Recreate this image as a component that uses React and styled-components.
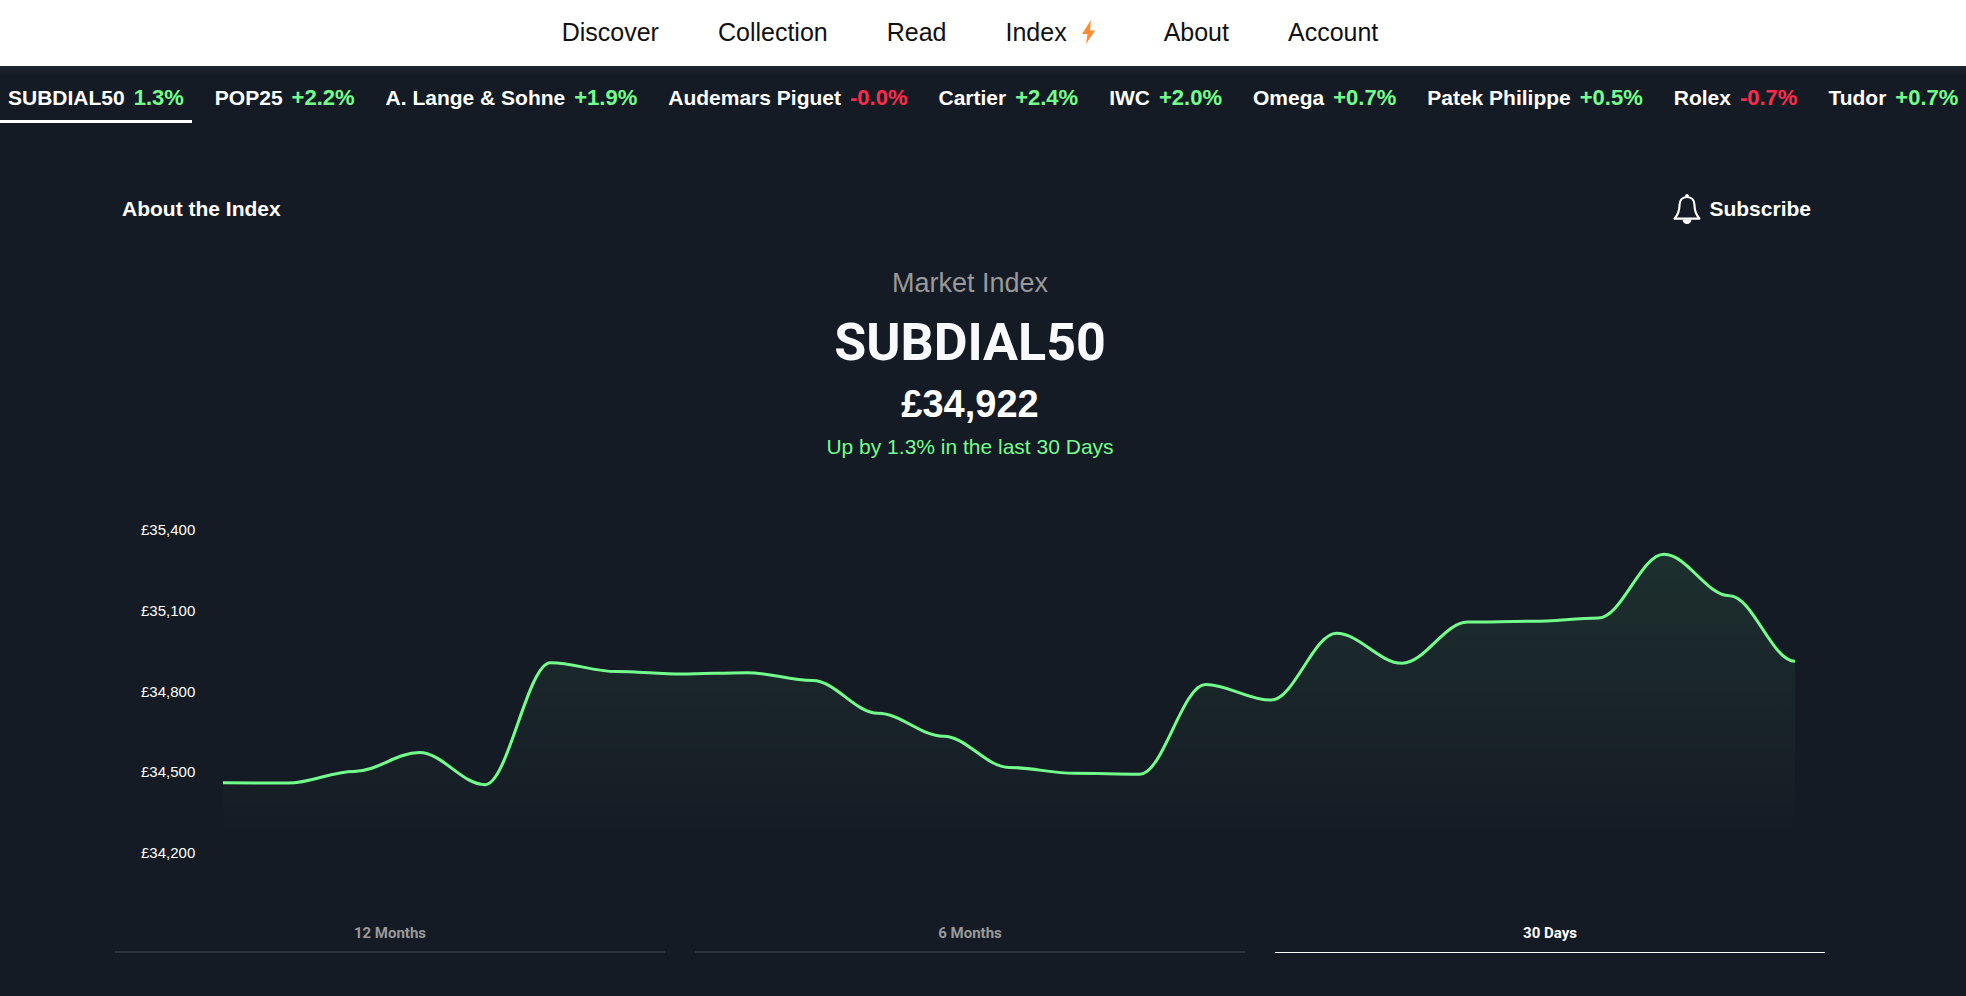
import React, { useState } from 'react'
import styled, { createGlobalStyle } from 'styled-components';


const brands = [
    { name: "SUBDIAL50", change: "1.3%" },
    { name: "POP25", change: "+2.2%" },
    { name: "A. Lange & Sohne", change: "+1.9%" },
    { name: "Audemars Piguet", change: "-0.0%" },
    { name: "Cartier", change: "+2.4%" },
    { name: "IWC", change: "+2.0%" },
    { name: "Omega", change: "+0.7%" },
    { name: "Patek Philippe", change: "+0.5%" },
    { name: "Rolex", change: "-0.7%" },
    { name: "Tudor", change: "+0.7%" },
]

const periods = ["12 Months", "6 Months", "30 Days"]

const priceLabels = ["£35,400", "£35,100", "£34,800", "£34,500", "£34,200"]

const MAX_PRICE = 35400
const MIN_PRICE = 34200

const prices = [
    34461, 34460, 34503, 34573, 34454, 34907, 34874, 34865, 34870, 34841, 34719, 34634, 34518,
    34496, 34493, 34826, 34768, 35016, 34905, 35058, 35061, 35073, 35310, 35156, 34912,
]

const CHART_WIDTH = 1572
const CHART_HEIGHT = 323

function getLinePath() {
    const step = CHART_WIDTH / (prices.length - 1)
    const handle = step * 0.35
    const getY = (price) => (MAX_PRICE - price) / (MAX_PRICE - MIN_PRICE) * CHART_HEIGHT

    return prices.map((price, i) => {
        const x = i * step
        const y = getY(price)
        if (i === 0) return `M ${x} ${y}`
        return `C ${x - step + handle} ${getY(prices[i - 1])} ${x - handle} ${y} ${x} ${y}`
    }).join(" ")
}

function BoltIcon() {
    return (
        <BoltSvg viewBox="0 0 13 24" aria-hidden="true">
            <path d="M9 0 L0 14 H5.5 L4 24 L13 10.5 H8 Z" fill="#FF8A30" />
        </BoltSvg>
    )
}

function BellIcon() {
    return (
        <BellSvg viewBox="0 0 28 30" aria-hidden="true">
            <path
                d="M14 3 C9.2 3 6.8 6.4 6.6 10.5 C6.4 17 5.4 20.5 1.6 24.6 H26.4 C22.6 20.5 21.6 17 21.4 10.5 C21.2 6.4 18.8 3 14 3 Z"
                fill="none" stroke="white" strokeWidth="2.2" strokeLinejoin="round"
            />
            <path d="M12.2 3 V1.6 A1.8 1.6 0 0 1 15.8 1.6 V3 Z" fill="white" />
            <path d="M9.6 25.5 H18.4 C18.2 28.4 16.6 30 14 30 C11.4 30 9.8 28.4 9.6 25.5 Z" fill="white" />
        </BellSvg>
    )
}

function PriceChart() {
    const line = getLinePath()

    return (
        <ChartContainer>
            <PriceAxis>
                {priceLabels.map((label) => <span key={label}>{label}</span>)}
            </PriceAxis>
            <ChartSvg viewBox={`0 0 ${CHART_WIDTH} ${CHART_HEIGHT}`} preserveAspectRatio="none" role="img" aria-label="SUBDIAL50 price">
                <defs>
                    <linearGradient id="area" x1="0" y1="0" x2="0" y2="1">
                        <stop offset="0" stopColor="#73FF8C" stopOpacity="0.09" />
                        <stop offset="0.95" stopColor="#73FF8C" stopOpacity="0" />
                    </linearGradient>
                </defs>
                <path d={`${line} V ${CHART_HEIGHT} H 0 Z`} fill="url(#area)" />
                <path d={line} fill="none" stroke="#73FF8C" strokeWidth="3" vectorEffect="non-scaling-stroke" />
            </ChartSvg>
        </ChartContainer>
    )
}

export default function App() {
    const [period, setPeriod] = useState("30 Days")

    return (
        <>
            <GlobalStyle />
            <NavBar>
                <NavLink href="#discover">Discover</NavLink>
                <NavLink href="#collection">Collection</NavLink>
                <NavLink href="#read">Read</NavLink>
                <NavLink href="#index">Index<BoltIcon /></NavLink>
                <NavLink href="#about">About</NavLink>
                <NavLink href="#account">Account</NavLink>
            </NavBar>

            <Ticker>
                {brands.map((brand, i) => (
                    <TickerLink key={brand.name} href="#index" $active={i === 0}>
                        {brand.name}
                        <Change $down={brand.change.startsWith("-")}>{brand.change}</Change>
                    </TickerLink>
                ))}
            </Ticker>

            <Main>
                <TopRow>
                    <TextLink href="#about">About the Index</TextLink>
                    <SubscribeBtn type="button"><BellIcon />Subscribe</SubscribeBtn>
                </TopRow>

                <Summary>
                    <Category>Market Index</Category>
                    <Title>SUBDIAL50</Title>
                    <Price>£34,922</Price>
                    <Trend>Up by 1.3% in the last 30 Days</Trend>
                </Summary>

                <PriceChart />

                <PeriodTabs>
                    {periods.map((name) => (
                        <PeriodBtn key={name} type="button" $active={name === period} onClick={() => setPeriod(name)}>
                            {name}
                        </PeriodBtn>
                    ))}
                </PeriodTabs>
            </Main>
        </>
    )
}


const GlobalStyle = createGlobalStyle`
* {
    box-sizing:border-box;
}
body {
    margin:0;
    background:#151B25;
    color:white;
    font-family:"Liberation Sans", Arial, sans-serif;
    overflow-x:hidden;
}
`

const NavBar = styled.nav`
display:flex;
justify-content:center;
gap:59px;
height:66px;
padding-right:26px;
background:white;
`

const NavLink = styled.a`
display:flex;
align-items:center;
padding-bottom:2px;
color:#111111;
font-size:25px;
text-decoration:none;
`

const BoltSvg = styled.svg`
width:13px;
height:24px;
margin:0 10px 0 15px;
`

const BellSvg = styled.svg`
width:28px;
height:30px;
`

const Ticker = styled.nav`
display:flex;
gap:15px;
height:57px;
background:linear-gradient(#20252F, #151B25 10px);
white-space:nowrap;
`

const TickerLink = styled.a`
display:flex;
align-items:center;
gap:9px;
padding:10px 8px 0;
border-bottom:3px solid ${props => props.$active ? "white" : "transparent"};
color:white;
font-size:21px;
font-weight:700;
text-decoration:none;
`

const Change = styled.span`
color:${props => props.$down ? "#FF2B4B" : "#73FF8C"};
font-size:22px;
`

const Main = styled.main`
padding:70px 141px 30px 115px;
`

const TopRow = styled.div`
display:flex;
justify-content:space-between;
align-items:center;
height:32px;
padding:0 14px 0 7px;
`

const TextLink = styled.a`
color:white;
font-size:21px;
font-weight:700;
text-decoration:none;
`

const SubscribeBtn = styled.button`
display:flex;
align-items:center;
gap:8px;
padding:0;
border:none;
background:none;
color:white;
font-family:inherit;
font-size:21px;
font-weight:700;
`

const Summary = styled.header`
display:flex;
flex-direction:column;
align-items:center;
padding-top:40px;
`

const Category = styled.p`
margin:0;
color:#999999;
font-size:27px;
line-height:36px;
`

const Title = styled.h1`
margin:0;
color:#F8F9FB;
font-family:Roboto, sans-serif;
font-size:52px;
font-weight:700;
line-height:84px;
`

const Price = styled.p`
margin:0;
font-size:38px;
font-weight:700;
line-height:38px;
`

const Trend = styled.p`
margin:0;
color:#73FF8C;
font-size:21px;
line-height:48px;
`

const ChartContainer = styled.section`
display:flex;
align-items:center;
gap:24px;
padding:49px 30px 0 26px;
`

const PriceAxis = styled.div`
display:flex;
flex-direction:column;
flex-shrink:0;
justify-content:space-between;
width:58px;
height:343px;
font-size:15px;
line-height:20px;
`

const ChartSvg = styled.svg`
flex:1;
min-width:0;
height:323px;
`

const PeriodTabs = styled.div`
display:grid;
grid-template-columns:repeat(3, 1fr);
align-items:end;
gap:30px;
padding-top:58px;
`

const PeriodBtn = styled.button`
padding:0 0 ${props => props.$active ? "7px" : "6px"};
border:none;
border-bottom:${props => props.$active ? "1px solid white" : "2px solid #2D313C"};
background:none;
color:${props => props.$active ? "white" : "#999999"};
font-family:Roboto, sans-serif;
font-size:15px;
font-weight:700;
line-height:24px;
`
